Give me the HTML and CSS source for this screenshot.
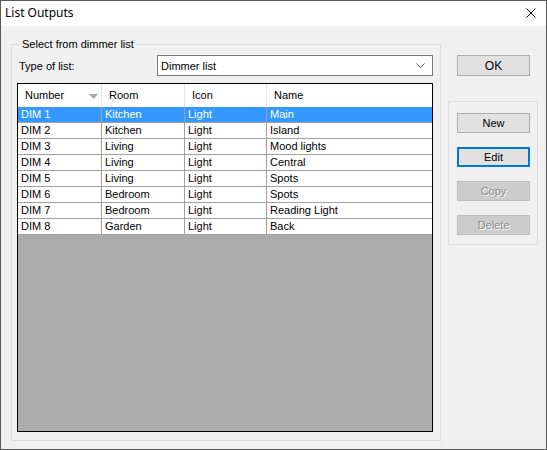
FILE: index.html
```html
<!DOCTYPE html>
<html lang="en">
<head>
    <meta charset="UTF-8">
    <title>List Outputs</title>
    <link rel="stylesheet" href="styles.css">
</head>
<body>
    <div class="window">
        <div class="titlebar">
            <span class="title">List Outputs</span>
            <svg class="close" width="10" height="10" viewBox="0 0 10 10">
                <path d="M0.5 0.5 L9.5 9.5 M9.5 0.5 L0.5 9.5" stroke="#000" stroke-width="1" fill="none"/>
            </svg>
        </div>
        <div class="content">
            <div class="group">
                <span class="legend">Select from dimmer list</span>
                <div class="typerow">
                    <span class="label">Type of list:</span>
                    <div class="combo">
                        <span>Dimmer list</span>
                        <svg width="9" height="6" viewBox="0 0 9 6">
                            <polyline points="0.5,0.5 4.5,4.5 8.5,0.5" stroke="#606060" stroke-width="1" fill="none"/>
                        </svg>
                    </div>
                </div>
                <div class="grid">
                    <div class="row head">
                        <div class="cell">Number
                            <svg class="sort" width="9" height="5" viewBox="0 0 9 5"><polygon points="0,0 9,0 4.5,5" fill="#a6a6a6"/></svg>
                        </div>
                        <div class="cell">Room</div>
                        <div class="cell">Icon</div>
                        <div class="cell">Name</div>
                    </div>
                    <div class="row selected">
                        <div class="cell">DIM 1</div><div class="cell">Kitchen</div><div class="cell">Light</div><div class="cell">Main</div>
                    </div>
                    <div class="row">
                        <div class="cell">DIM 2</div><div class="cell">Kitchen</div><div class="cell">Light</div><div class="cell">Island</div>
                    </div>
                    <div class="row">
                        <div class="cell">DIM 3</div><div class="cell">Living</div><div class="cell">Light</div><div class="cell">Mood lights</div>
                    </div>
                    <div class="row">
                        <div class="cell">DIM 4</div><div class="cell">Living</div><div class="cell">Light</div><div class="cell">Central</div>
                    </div>
                    <div class="row">
                        <div class="cell">DIM 5</div><div class="cell">Living</div><div class="cell">Light</div><div class="cell">Spots</div>
                    </div>
                    <div class="row">
                        <div class="cell">DIM 6</div><div class="cell">Bedroom</div><div class="cell">Light</div><div class="cell">Spots</div>
                    </div>
                    <div class="row">
                        <div class="cell">DIM 7</div><div class="cell">Bedroom</div><div class="cell">Light</div><div class="cell">Reading Light</div>
                    </div>
                    <div class="row">
                        <div class="cell">DIM 8</div><div class="cell">Garden</div><div class="cell">Light</div><div class="cell">Back</div>
                    </div>
                </div>
            </div>
            <div class="side">
                <button class="btn ok">OK</button>
                <div class="panel">
                    <button class="btn">New</button>
                    <button class="btn focused">Edit</button>
                    <button class="btn disabled">Copy</button>
                    <button class="btn disabled">Delete</button>
                </div>
            </div>
        </div>
    </div>
</body>
</html>
```

FILE: styles.css
```css
html, body {
    margin: 0;
    padding: 0;
}
body {
    font-family: "Liberation Sans", Arial, sans-serif;
    font-size: 11px;
    color: #000;
}
.window {
    width: 547px;
    height: 450px;
    box-sizing: border-box;
    border: 1px solid #5a5a5a;
    background: #f0f0f0;
    display: flex;
    flex-direction: column;
}
.titlebar {
    height: 25px;
    background: #fff;
    display: flex;
    align-items: center;
    justify-content: space-between;
    padding: 0 10px 0 4px;
}
.title {
    font-family: "Noto Sans", sans-serif;
    font-size: 12px;
    padding-bottom: 2px;
}
.close {
    margin-bottom: 1px;
}
.content {
    display: flex;
    padding: 0 0 0 10px;
}
.group {
    margin-top: 18px;
    width: 430px;
    height: 397px;
    box-sizing: border-box;
    border: 1px solid #dcdcdc;
    padding: 0 7px 0 5px;
    display: flex;
    flex-direction: column;
}
.legend {
    align-self: flex-start;
    margin: -7px 0 0 3px;
    padding: 0 2px;
    background: #f0f0f0;
    line-height: 13px;
}
.typerow {
    display: flex;
    align-items: center;
    margin-top: 4px;
    height: 21px;
}
.label {
    width: 138px;
    padding-left: 2px;
}
.combo {
    flex: 1;
    height: 21px;
    box-sizing: border-box;
    border: 1px solid #7a7a7a;
    background: #fff;
    display: flex;
    align-items: center;
    justify-content: space-between;
    padding: 0 7px 0 3px;
}
.grid {
    margin-top: 7px;
    height: 349px;
    box-sizing: border-box;
    border: 1px solid #000;
    background: #ababab;
}
.row {
    display: grid;
    grid-template-columns: 84px 83px 82px 1fr;
    height: 16px;
    background: #fff;
}
.row .cell {
    border-right: 1px solid #a0a0a0;
    border-bottom: 1px solid #a0a0a0;
    padding-left: 3px;
    line-height: 15px;
    white-space: nowrap;
    overflow: hidden;
}
.row .cell:last-child {
    border-right: none;
}
.row.head {
    height: 23px;
}
.row.head .cell {
    border-bottom: none;
    border-right-color: #e5e5e5;
    padding-left: 7px;
    line-height: 23px;
    position: relative;
}
.sort {
    position: absolute;
    right: 3px;
    top: 10px;
}
.row.selected {
    background: #3399ff;
    color: #fff;
}
.side {
    margin-left: 7px;
    width: 90px;
    display: flex;
    flex-direction: column;
}
.btn {
    font-family: "Liberation Sans", Arial, sans-serif;
    font-size: 11px;
    width: 73px;
    height: 20px;
    box-sizing: border-box;
    border: 1px solid #adadad;
    background: #e1e1e1;
    color: #000;
    padding: 0;
    margin: 0;
}
.ok {
    margin: 29px 0 0 9px;
    height: 21px;
    font-size: 12px;
}
.panel {
    margin-top: 25px;
    height: 144px;
    box-sizing: border-box;
    border: 1px solid #dcdcdc;
    padding: 11px 0 0 8px;
    display: flex;
    flex-direction: column;
    gap: 14px;
}
.panel .btn {
    height: 20px;
}
.focused {
    border: 2px solid #0078d7;
}
.disabled {
    background: #cccccc;
    border-color: #bfbfbf;
    color: #8a8a8a;
    text-shadow: 1px 1px 0 #fff;
}
```
